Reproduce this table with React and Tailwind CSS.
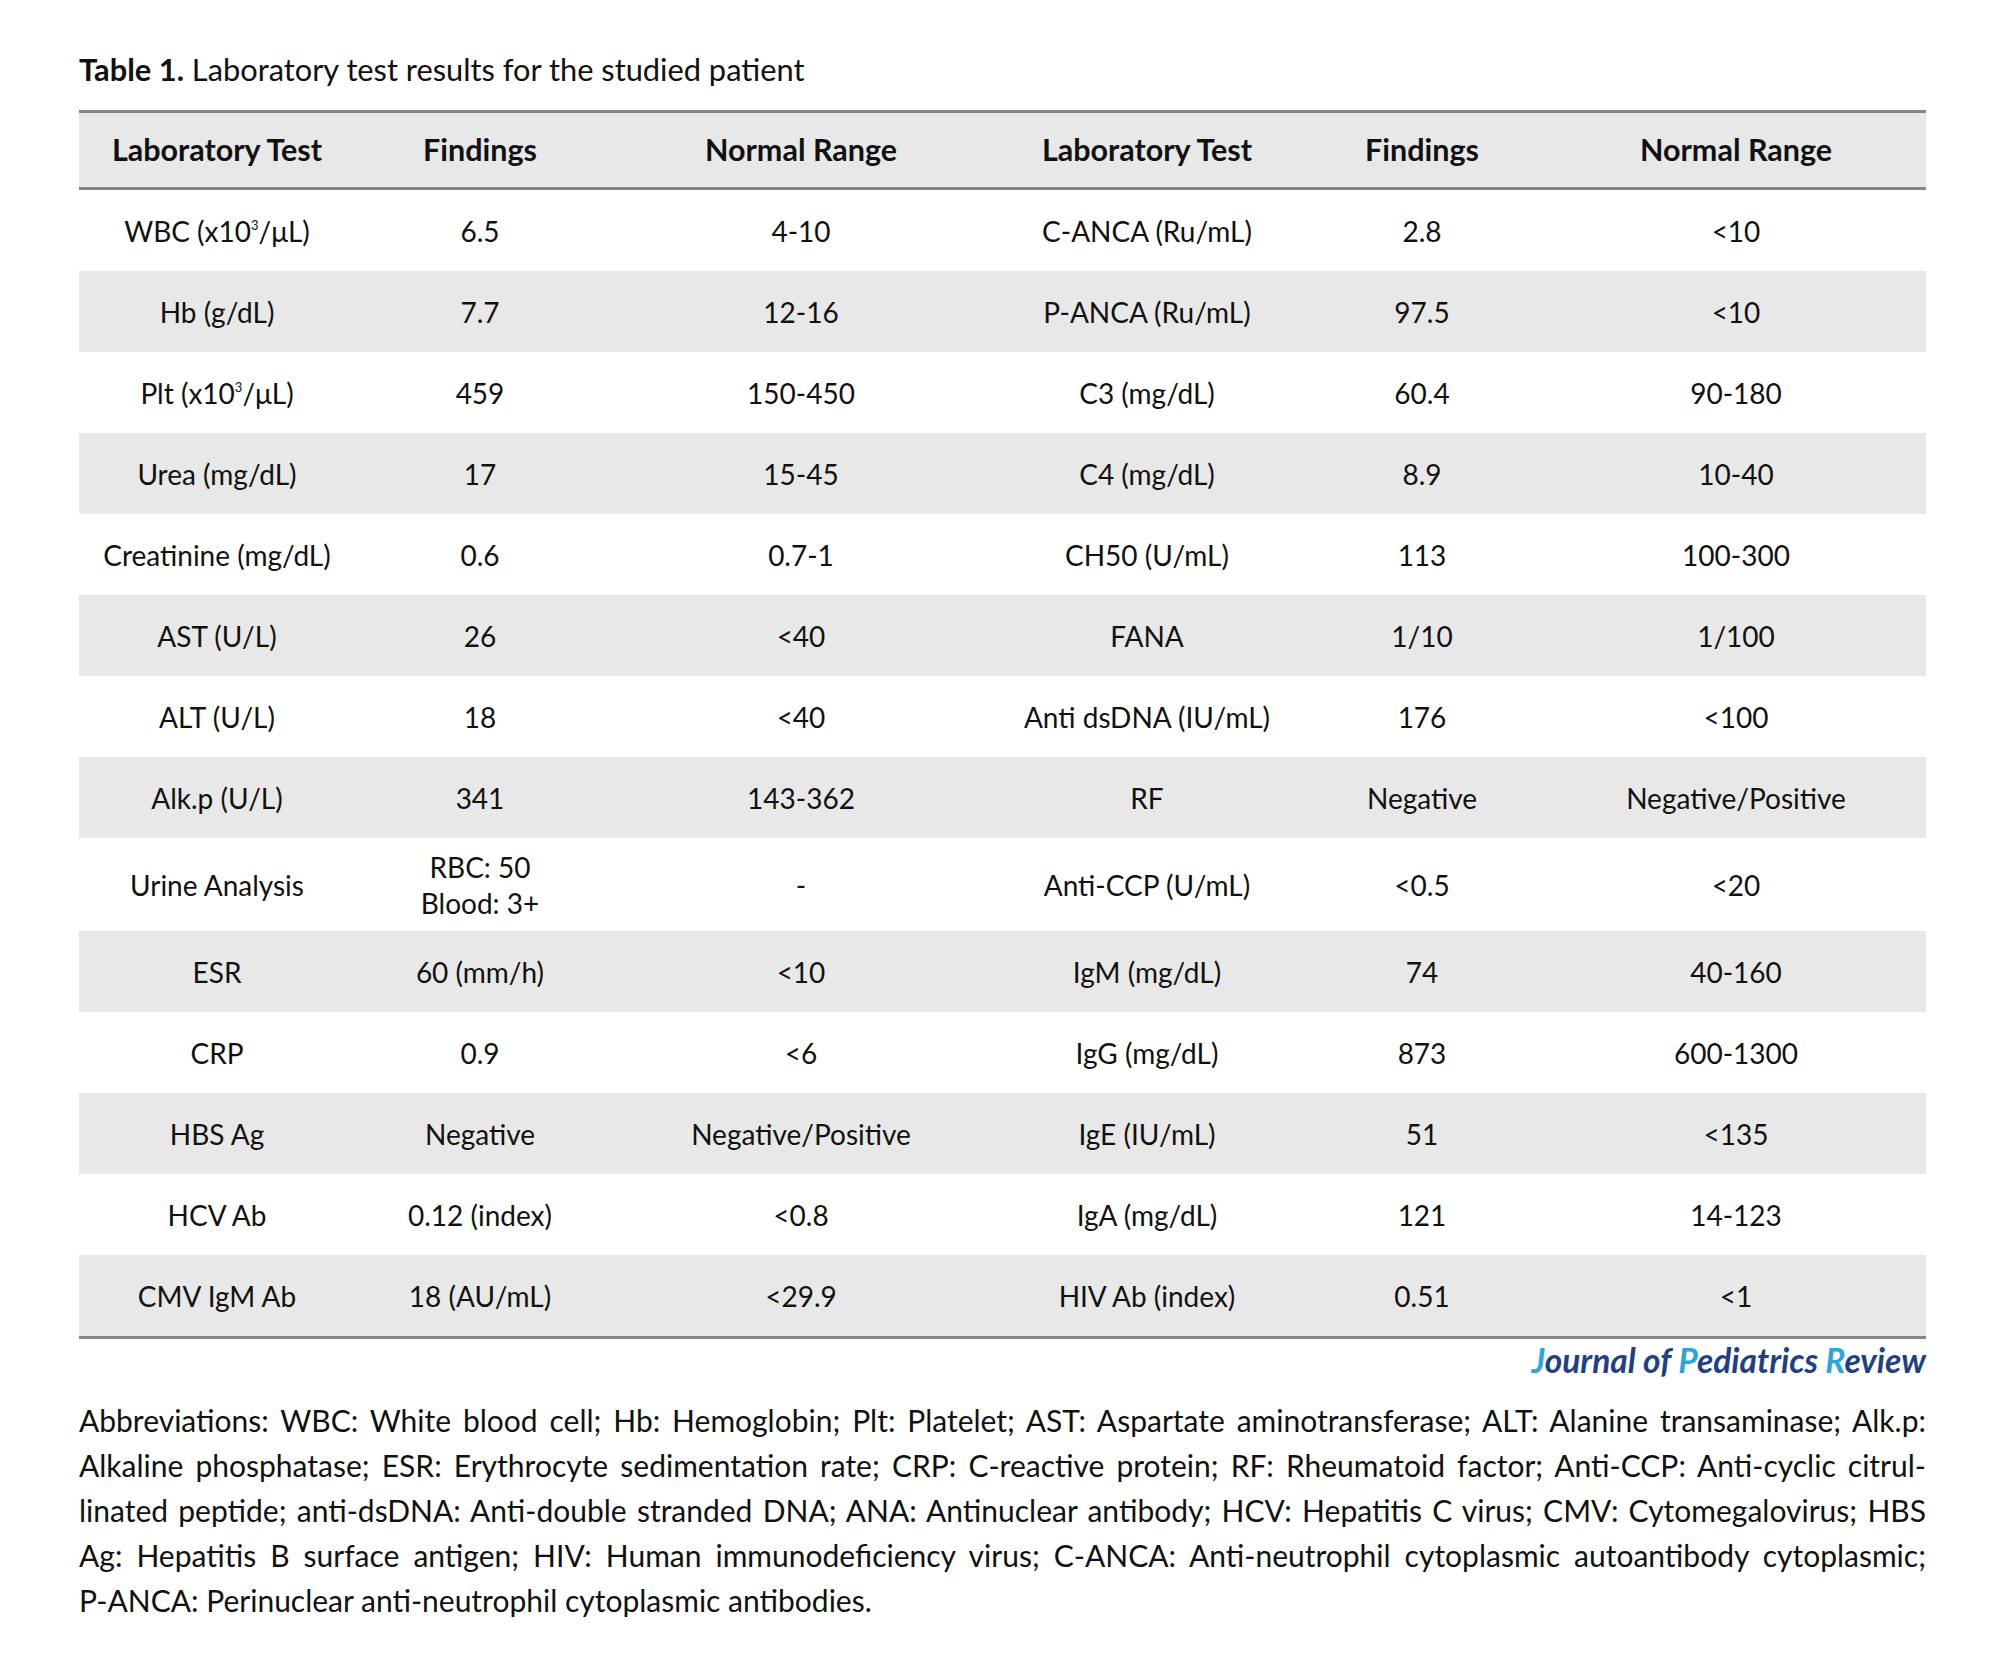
import React from "react";

const rows = [
  [<>WBC (x10<sup className="text-[13px] -top-[0.9em]">3</sup>/μL)</>, "6.5", "4-10", "C-ANCA (Ru/mL)", "2.8", "<10"],
  ["Hb (g/dL)", "7.7", "12-16", "P-ANCA (Ru/mL)", "97.5", "<10"],
  [<>Plt (x10<sup className="text-[13px] -top-[0.9em]">3</sup>/μL)</>, "459", "150-450", "C3 (mg/dL)", "60.4", "90-180"],
  ["Urea (mg/dL)", "17", "15-45", "C4 (mg/dL)", "8.9", "10-40"],
  ["Creatinine (mg/dL)", "0.6", "0.7-1", "CH50 (U/mL)", "113", "100-300"],
  ["AST (U/L)", "26", "<40", "FANA", "1/10", "1/100"],
  ["ALT (U/L)", "18", "<40", "Anti dsDNA (IU/mL)", "176", "<100"],
  ["Alk.p (U/L)", "341", "143-362", "RF", "Negative", "Negative/Positive"],
  ["Urine Analysis", <>RBC: 50<br />Blood: 3+</>, "-", "Anti-CCP (U/mL)", "<0.5", "<20"],
  ["ESR", "60 (mm/h)", "<10", "IgM (mg/dL)", "74", "40-160"],
  ["CRP", "0.9", "<6", "IgG (mg/dL)", "873", "600-1300"],
  ["HBS Ag", "Negative", "Negative/Positive", "IgE (IU/mL)", "51", "<135"],
  ["HCV Ab", "0.12 (index)", "<0.8", "IgA (mg/dL)", "121", "14-123"],
  ["CMV IgM Ab", "18 (AU/mL)", "<29.9", "HIV Ab (index)", "0.51", "<1"],
];

const headers = ["Laboratory Test", "Findings", "Normal Range", "Laboratory Test", "Findings", "Normal Range"];

const lines = [
  "Abbreviations: WBC: White blood cell; Hb: Hemoglobin; Plt: Platelet; AST: Aspartate aminotransferase; ALT: Alanine transaminase; Alk.p:",
  "Alkaline phosphatase; ESR: Erythrocyte sedimentation rate; CRP: C-reactive protein; RF: Rheumatoid factor; Anti-CCP: Anti-cyclic citrul-",
  "linated peptide; anti-dsDNA: Anti-double stranded DNA; ANA: Antinuclear antibody; HCV: Hepatitis C virus; CMV: Cytomegalovirus; HBS",
  "Ag: Hepatitis B surface antigen; HIV: Human immunodeficiency virus; C-ANCA: Anti-neutrophil cytoplasmic autoantibody cytoplasmic;",
];

export default function App() {
  return (
    <div className="w-[2000px] h-[1662px] bg-white font-[Lato,sans-serif] text-[#111]">
      <div className="pl-[79px] pr-[74px] pt-[50px]">
        <div className="h-[40px] leading-[40px] text-[30.8px]">
          <span className="font-bold">Table 1.</span> Laboratory test results for the studied patient
        </div>
        <div className="mt-[20px]">
          <div className="grid grid-cols-[276px_250px_392px_300px_250px_378px] h-[80px] items-center border-t-[3px] border-b-[3px] border-[#858585] bg-[#e8e8e8] text-[30.5px] font-bold text-center">
            {headers.map((h, i) => (
              <div key={i}>{h}</div>
            ))}
          </div>
          {rows.map((r, i) => (
            <div
              key={i}
              className={
                "grid grid-cols-[276px_250px_392px_300px_250px_378px] items-center text-center text-[28px] leading-[36px] " +
                (i === 8 ? "h-[93px] " : "h-[81px] ") +
                (i % 2 === 1 ? "bg-[#e8e8e8]" : "bg-white")
              }
            >
              {r.map((c, j) => (
                <div key={j}>{c}</div>
              ))}
            </div>
          ))}
          <div className="h-[3px] bg-[#858585]" />
        </div>
        <div className="h-[42px] leading-[42px] text-right text-[33.5px] font-bold italic text-[#1f3f86]">
          <span className="text-[#2ba6dd]">J</span>ournal of <span className="text-[#2ba6dd]">P</span>ediatrics <span className="text-[#2ba6dd]">R</span>eview
        </div>
        <div className="mt-[17px] text-[30px] leading-[45px]">
          {lines.map((l, i) => (
            <div key={i} className="text-justify [text-align-last:justify] whitespace-nowrap">{l}</div>
          ))}
          <div>P-ANCA: Perinuclear anti-neutrophil cytoplasmic antibodies.</div>
        </div>
      </div>
    </div>
  );
}
